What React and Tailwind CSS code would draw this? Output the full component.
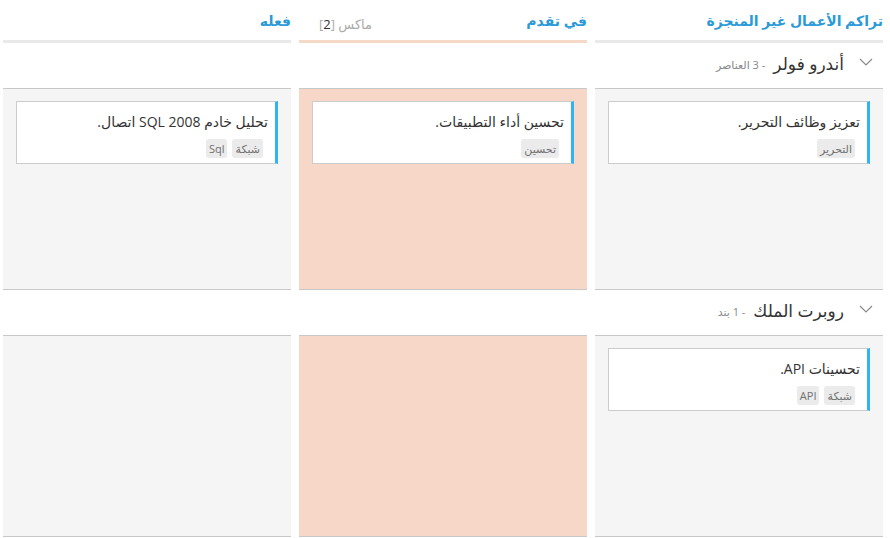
const columns = [
    { key: "open", title: "تراكم الأعمال غير المنجزة", band: "bg-[#e9e9e9]", cell: "bg-[#f5f5f5]" },
    { key: "progress", title: "في تقدم", band: "bg-[#f6d8c8]", cell: "bg-[#f7d8c8]", max: 2 },
    { key: "done", title: "فعله", band: "bg-[#e9e9e9]", cell: "bg-[#f5f5f5]" },
];

const lanes = [
    {
        name: "أندرو فولر",
        count: "- 3 العناصر",
        cards: {
            open: [{ title: "تعزيز وظائف التحرير.", tags: ["التحرير"] }],
            progress: [{ title: "تحسين أداء التطبيقات.", tags: ["تحسين"] }],
            done: [{ title: "تحليل خادم SQL 2008 اتصال.", tags: ["شبكة", "Sql"] }],
        },
    },
    {
        name: "روبرت الملك",
        count: "- 1 بند",
        cards: {
            open: [{ title: "تحسينات API.", tags: ["شبكة", "API"] }],
            progress: [],
            done: [],
        },
    },
];

const Chevron = () => (
    <svg width="14" height="8" viewBox="0 0 14 8" className="mt-[-4px]">
        <polyline points="1,1 7,7 13,1" fill="none" stroke="#8a8a8a" strokeWidth="1.2" />
    </svg>
);

const Card = ({ title, tags }) => {
    return (
        <div className="bg-white border border-[#cccccc] border-r-[3px] border-r-[#2fb5f0] pt-[9px] pb-[5px] pr-[7px] pl-2">
            <div className="text-[14px] leading-[22px] text-[#333333]">{title}</div>
            <div className="flex gap-[5px] mt-[6px] pr-[5px]">
                {tags.map(tag => (
                    <span key={tag} className="bg-[#ebebeb] rounded-[3px] px-[3px] h-[19px] leading-[19px] text-[11px] text-[#707070]">
                        {tag}
                    </span>
                ))}
            </div>
        </div>
    );
};

const App = () => {
    return (
        <div dir="rtl" className="bg-white w-[890px] h-[538px] overflow-hidden" style={{ fontFamily: '"Open Sans", "DejaVu Sans", sans-serif' }}>
            <div className="w-[880px] mr-[7px]">
                {/* column headers */}
                <div className="grid grid-cols-3 gap-x-2">
                    {columns.map(col => (
                        <div key={col.key}>
                            <div className="h-[40px] flex items-end justify-between pb-[9px]">
                                <span className="text-[14px] font-semibold text-[#2a9ad8] leading-[20px]">{col.title}</span>
                                {col.max && (
                                    <span className="ml-[20px] text-[13px] text-[#aaaaaa] leading-[16px] mb-[-1px]">
                                        ماكس <span>[<span className="text-[#333333]">{col.max}</span>]</span>
                                    </span>
                                )}
                            </div>
                            <div className={`h-[3px] ${col.band}`}></div>
                        </div>
                    ))}
                </div>

                {lanes.map(lane => (
                    <div key={lane.name}>
                        {/* swimlane header */}
                        <div className="grid grid-cols-3 gap-x-2">
                            {columns.map((col, i) => (
                                <div key={col.key} className="h-[46px] border-b border-[#c8c8c8] bg-white">
                                    {i === 0 && (
                                        <div className="flex items-center h-full pr-[10px] pb-[4px]">
                                            <Chevron />
                                            <span className="mr-[15px] text-[17px] text-[#333333] leading-[22px]">{lane.name}</span>
                                            <span className="mr-[8px] mt-[4px] text-[11px] text-[#888888]">{lane.count}</span>
                                        </div>
                                    )}
                                </div>
                            ))}
                        </div>

                        {/* cells */}
                        <div className="grid grid-cols-3 gap-x-2">
                            {columns.map(col => (
                                <div key={col.key} className={`h-[201px] border-b border-[#c8c8c8] ${col.cell} pt-3 px-[13px] flex flex-col gap-2`}>
                                    {lane.cards[col.key].map(card => (
                                        <Card key={card.title} {...card} />
                                    ))}
                                </div>
                            ))}
                        </div>
                    </div>
                ))}
            </div>
        </div>
    );
};

export default App;
